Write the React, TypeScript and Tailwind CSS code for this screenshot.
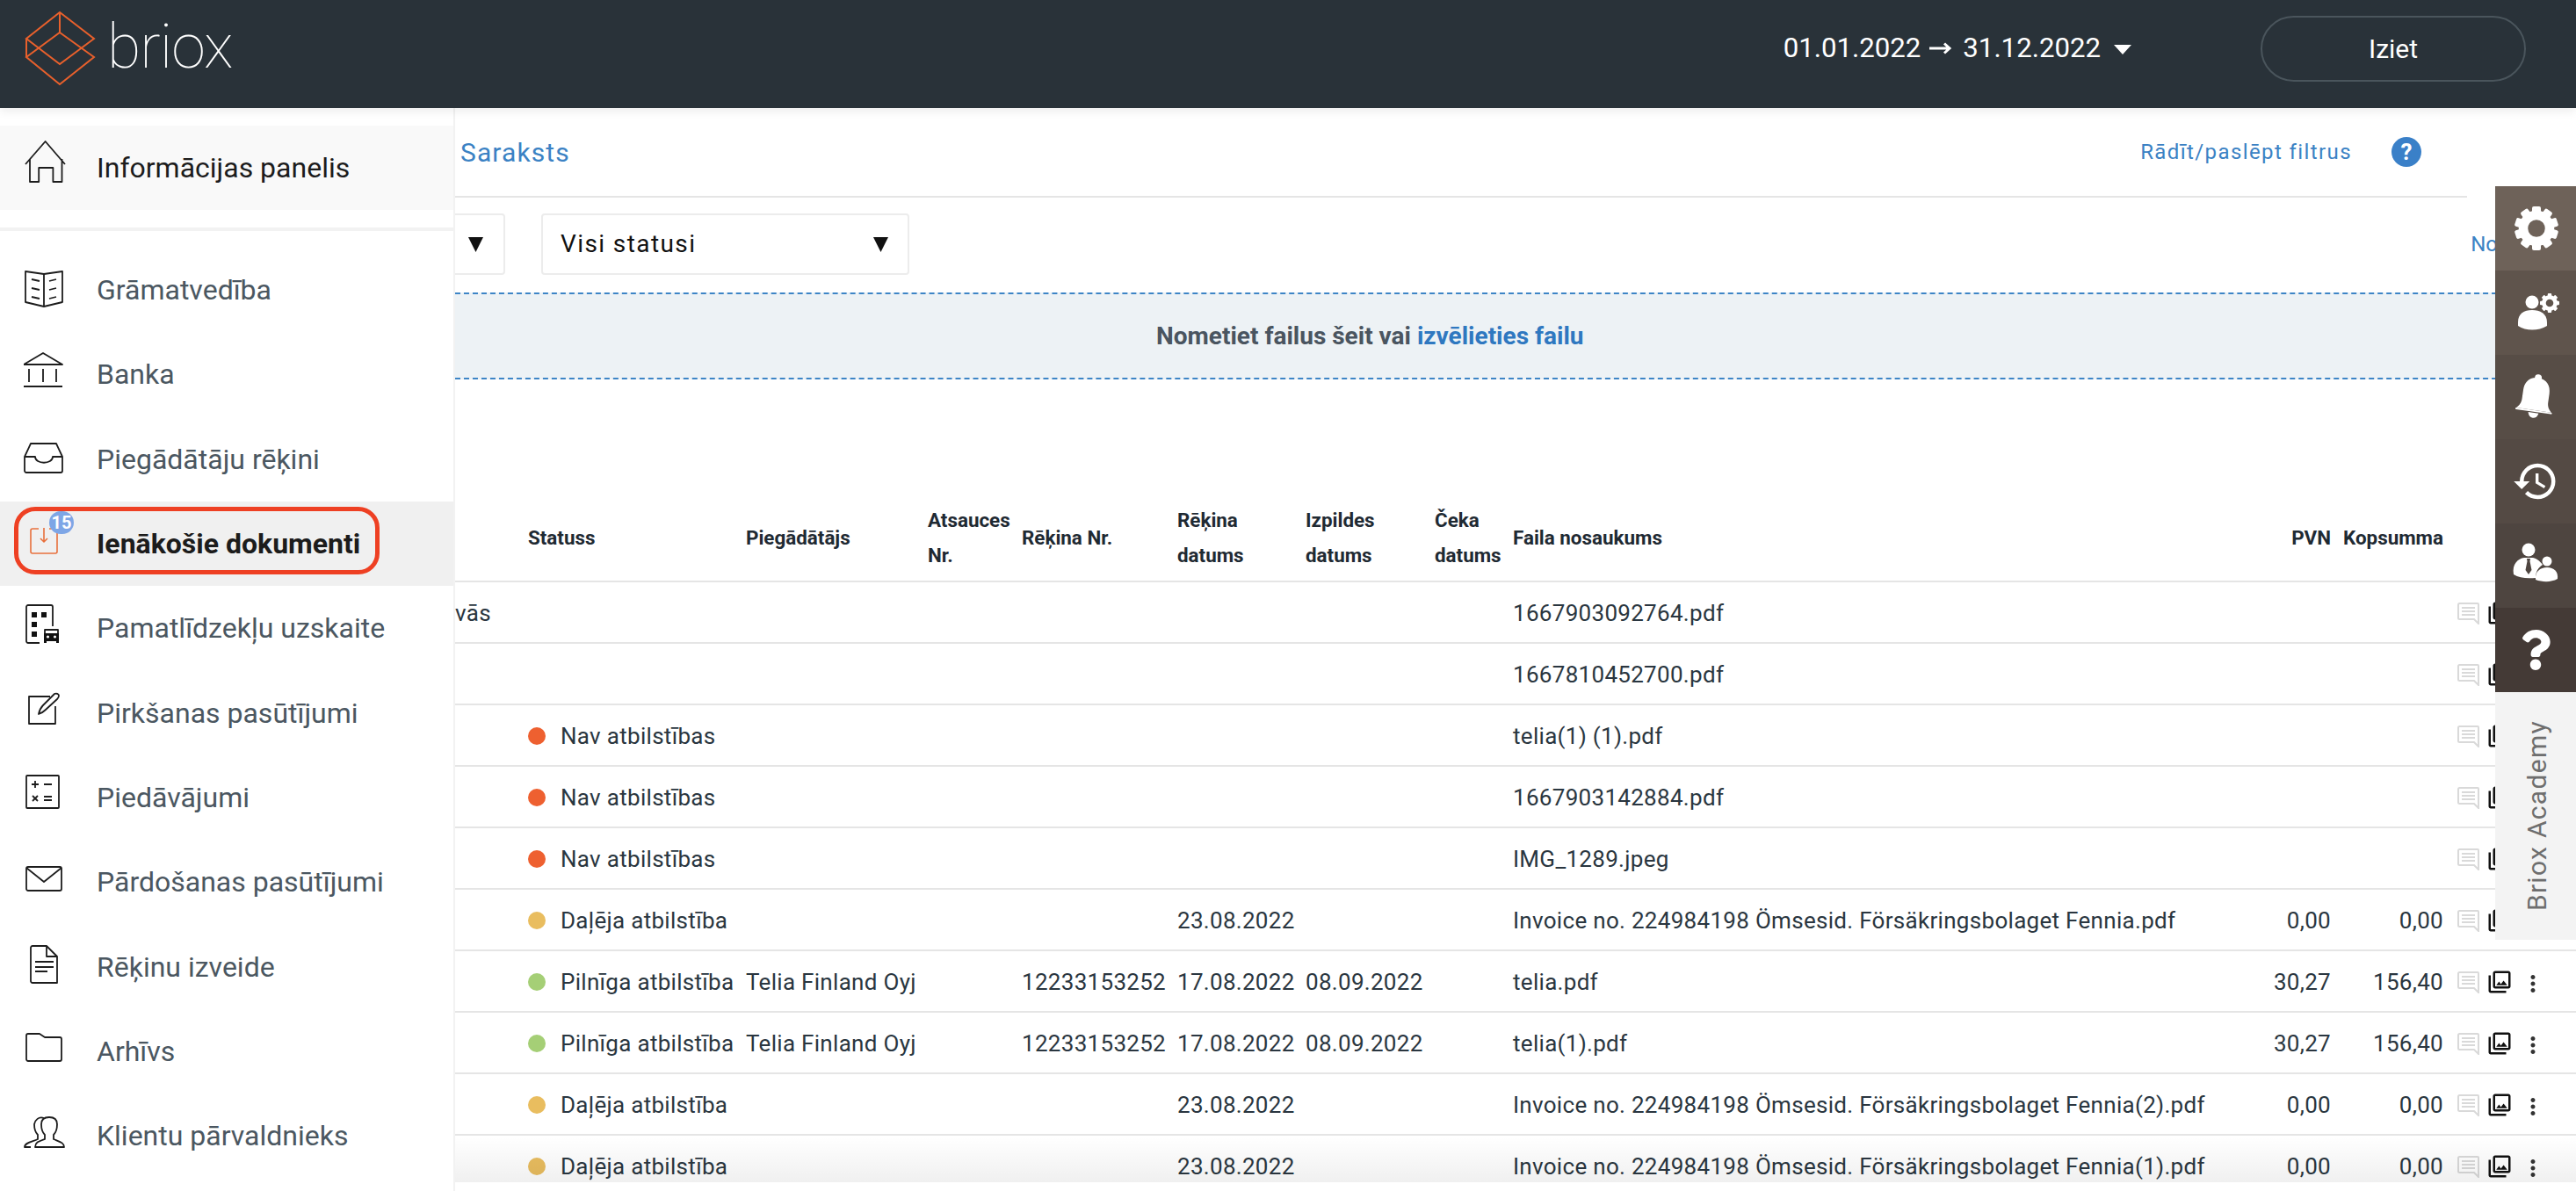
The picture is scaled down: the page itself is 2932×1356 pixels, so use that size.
import { MdHistory, MdMoreVert, MdOutlinePhotoLibrary } from 'react-icons/md'
import { FaQuestion } from 'react-icons/fa'

const gridCols =
  'grid grid-cols-[83px_248px_207px_107px_177px_146px_147px_89px_838px_93px_128px_1fr] items-center'

function Icon({ children }: { children: React.ReactNode }) {
  return (
    <svg viewBox="0 0 56 64" fill="none" stroke="#1d1d1d" strokeWidth="1.8" strokeLinejoin="round" className="w-[56px] h-[64px] shrink-0">
      {children}
    </svg>
  )
}

const menu = [
  {
    label: 'Grāmatvedība',
    icon: (
      <>
        <path d="M2 11L23 14L44 11V46L23 51L2 46Z" />
        <path d="M23 14V51" />
        <path d="M9 20l9 2M9 30l9 2M9 40l9 2M29 22l8-2M29 32l8-2M29 42l8-2" />
      </>
    ),
  },
  {
    label: 'Banka',
    icon: (
      <>
        <path d="M0 21L22 8L44 21Z" />
        <path d="M6 26V41M22 26V41M37 26V41M0 46H44" />
      </>
    ),
  },
  {
    label: 'Piegādātāju rēķini',
    icon: (
      <>
        <path d="M8 14H37L44 29V45a2 2 0 0 1-2 2H3a2 2 0 0 1-2-2V29Z" />
        <path d="M1 29H13c0 9 20 9 20 0H44" />
      </>
    ),
  },
  {
    label: 'Ienākošie dokumenti',
    active: true,
    icon: (
      <g stroke="#e8703c" strokeWidth="1.6">
        <path d="M17 15H10a2 2 0 0 0-2 2V41a2 2 0 0 0 2 2H36a2 2 0 0 0 2-2V17a2 2 0 0 0-2-2H29" />
        <path d="M23 14V30M19 26l4 4 4-4" />
      </g>
    ),
  },
  {
    label: 'Pamatlīdzekļu uzskaite',
    icon: (
      <>
        <path d="M18 49H5a2 2 0 0 1-2-2V8a2 2 0 0 1 2-2H31a2 2 0 0 1 2 2V30" />
        <g fill="#111" stroke="none">
          <rect x="9" y="14" width="6" height="6" />
          <rect x="20" y="14" width="6" height="6" />
          <rect x="9" y="25" width="6" height="6" />
          <rect x="9" y="36" width="6" height="6" />
          <path d="M23 38H40V49H37V47H26V49H23Z" />
        </g>
        <path d="M24 38V34H39V38" />
        <circle cx="27.5" cy="42" r="1.6" fill="#fff" stroke="none" />
        <circle cx="35.5" cy="42" r="1.6" fill="#fff" stroke="none" />
      </>
    ),
  },
  {
    label: 'Pirkšanas pasūtījumi',
    icon: (
      <>
        <path d="M30 13H6V44H36V24" />
        <path d="M17 33C18 28 20 25 22 23L35 10C37 9 40 10 40 12C40 14 39 15 38 16L25 28C23 30 20 32 17 33Z" />
      </>
    ),
  },
  {
    label: 'Piedāvājumi',
    icon: (
      <>
        <rect x="3" y="7" width="37" height="37" rx="1" />
        <path d="M13 13V21M9 17H17M23 17H32M10 30L16 36M16 30L10 36M23 31H32M23 35H32" />
      </>
    ),
  },
  {
    label: 'Pārdošanas pasūtījumi',
    icon: (
      <>
        <rect x="3" y="15" width="40" height="27" rx="2" />
        <path d="M3 16L23 32L43 16" />
      </>
    ),
  },
  {
    label: 'Rēķinu izveide',
    icon: (
      <>
        <path d="M8 10a2 2 0 0 1 2-2H26L38 20V50H10a2 2 0 0 1-2-2Z" />
        <path d="M26 8V20H38M13 26H34M13 32H34M13 37H27" />
      </>
    ),
  },
  {
    label: 'Arhīvs',
    icon: <path d="M3 14a2 2 0 0 1 2-2H18L24 16H41a2 2 0 0 1 2 2V41a2 2 0 0 1-2 2H5a2 2 0 0 1-2-2Z" />,
  },
  {
    label: 'Klientu pārvaldnieks',
    icon: (
      <>
        <path d="M13 45C13 40 16 39 24 36V31C21 28 20 24 20 19C20 13 24 11 29 11C34 11 38 13 38 19C38 24 37 28 34 31V36C41 39 46 40 46 45Z" />
        <path d="M23 12C17 10 13 14 12 19C12 24 13 28 16 31V36C9 39 1 40 1 45H8" />
      </>
    ),
  },
]

const invoice = 'Invoice no. 224984198 Ömsesid. Försäkringsbolaget Fennia'

const rows = [
  { prefix: 'vās', file: '1667903092764.pdf' },
  { file: '1667810452700.pdf' },
  { dot: 'bg-[#ee6030]', status: 'Nav atbilstības', file: 'telia(1) (1).pdf' },
  { dot: 'bg-[#ee6030]', status: 'Nav atbilstības', file: '1667903142884.pdf' },
  { dot: 'bg-[#ee6030]', status: 'Nav atbilstības', file: 'IMG_1289.jpeg' },
  { dot: 'bg-[#e9bd5f]', status: 'Daļēja atbilstība', date: '23.08.2022', file: invoice + '.pdf', vat: '0,00', total: '0,00' },
  { dot: 'bg-[#a5cf76]', status: 'Pilnīga atbilstība', supplier: 'Telia Finland Oyj', no: '12233153252', date: '17.08.2022', due: '08.09.2022', file: 'telia.pdf', vat: '30,27', total: '156,40' },
  { dot: 'bg-[#a5cf76]', status: 'Pilnīga atbilstība', supplier: 'Telia Finland Oyj', no: '12233153252', date: '17.08.2022', due: '08.09.2022', file: 'telia(1).pdf', vat: '30,27', total: '156,40' },
  { dot: 'bg-[#e9bd5f]', status: 'Daļēja atbilstība', date: '23.08.2022', file: invoice + '(2).pdf', vat: '0,00', total: '0,00' },
  { dot: 'bg-[#e9bd5f]', status: 'Daļēja atbilstība', date: '23.08.2022', file: invoice + '(1).pdf', vat: '0,00', total: '0,00' },
]

function Gear({ cx, cy, r, teeth }: { cx: number; cy: number; r: number; teeth: number }) {
  return (
    <g>
      {Array.from({ length: teeth }, (_, i) => (
        <rect
          key={i}
          x={cx - r * 0.2}
          y={cy - r}
          width={r * 0.4}
          height={r * 0.4}
          rx={r * 0.08}
          fill="#fff"
          transform={`rotate(${(360 / teeth) * i} ${cx} ${cy})`}
        />
      ))}
      <circle cx={cx} cy={cy} r={r * 0.6} fill="none" stroke="#fff" strokeWidth={r * 0.42} />
    </g>
  )
}

function CommentIcon() {
  return (
    <svg viewBox="0 0 25 25" fill="none" stroke="#d9d9d9" className="w-[25px] h-[25px] shrink-0">
      <path d="M1 2.5a1.5 1.5 0 0 1 1.5-1.5H23a1 1 0 0 1 1 1V24L19 19H2.5A1.5 1.5 0 0 1 1 17.5Z" strokeWidth="2" />
      <path d="M5 6H20M5 10H20M5 14H20" strokeWidth="1.8" />
    </svg>
  )
}

function SidePanel() {
  return (
    <div className="absolute right-0 top-[89px] w-[92px] flex flex-col">
      <div className="h-[96px] bg-[#6e6259] flex items-center justify-center pl-[2px]">
        <svg viewBox="0 0 56 56" className="w-[56px] h-[56px]">
          <Gear cx={28} cy={28} r={25} teeth={10} />
        </svg>
      </div>
      <div className="h-[96px] bg-[#5f544c] flex items-center justify-center pl-[6px]">
        <svg viewBox="0 0 56 56" className="w-[56px] h-[56px]" fill="#fff">
          <circle cx="21" cy="16" r="7.5" />
          <path d="M5 39C5 29 12 25 21 25C30 25 38 29 38 39V43C28 49 14 49 5 43Z" />
          <Gear cx={41} cy={17} r={11} teeth={8} />
        </svg>
      </div>
      <div className="h-[96px] bg-[#574d46] flex items-center justify-center">
        <svg viewBox="0 0 56 56" className="w-[56px] h-[56px] rotate-[8deg]" fill="#fff">
          <circle cx="28" cy="6" r="4" />
          <path d="M28 6C38 6 43 13 43 22V32C43 37 45 40 48 43H8C11 40 13 37 13 32V22C13 13 18 6 28 6Z" />
          <rect x="7" y="43" width="42" height="2" rx="1" />
          <path d="M22 46H34C33 50 31 52 28 52C25 52 23 50 22 46Z" />
        </svg>
      </div>
      <div className="h-[96px] bg-[#544a44] flex items-center justify-center">
        <MdHistory size={54} color="#fff" />
      </div>
      <div className="h-[96px] bg-[#4e4540] flex items-center justify-center">
        <svg viewBox="0 0 56 56" className="w-[56px] h-[56px]" fill="#fff">
          <circle cx="20" cy="10" r="7.5" />
          <path d="M3 38C1 26 8 20 15 19H25C30 20 34 24 36 27C31 30 28 35 28 42C18 43 9 42 3 38Z" />
          <path d="M18 20H22L21.5 23L23.5 33L20 38L16.5 33L18.5 23Z" fill="#4e4540" />
          <circle cx="41" cy="23" r="5.5" />
          <path d="M28 44C27 35 33 30 41 30C49 30 54 35 53 43C46 47 36 47 28 44Z" />
        </svg>
      </div>
      <div className="h-[96px] bg-[#443a36] flex items-center justify-center">
        <FaQuestion size={46} color="#fff" />
      </div>
      <div className="h-[282px] bg-[#f3f3f3] flex items-center justify-center pl-[2px]">
        <span className="[writing-mode:vertical-rl] rotate-180 text-[30px] tracking-[1.3px] text-[#6e6e6e] whitespace-nowrap">
          Briox Academy
        </span>
      </div>
    </div>
  )
}

export default function App() {
  return (
    <div className="h-screen w-full flex flex-col overflow-hidden bg-white [font-family:Roboto,sans-serif]">
      {/* header */}
      <header className="h-[123px] shrink-0 bg-[#293239] flex items-center pl-[27px] pr-[57px] pb-[13px] relative z-10 shadow-[0_4px_10px_rgba(0,0,0,0.07)]">
        <svg viewBox="0 0 82 86" fill="none" stroke="#e8602c" strokeWidth="2" className="w-[82px] h-[86px]">
          <path d="M41 2L80 32L41 61L3 32Z" />
          <path d="M41 25L80 53L41 84L3 53Z" />
          <path d="M3 32V53M41 2V25" />
        </svg>
        <span className="ml-[13px] -mt-[4px] text-[70px] leading-none font-thin tracking-[-1px] text-white">briox</span>
        <div className="ml-auto flex items-center text-white text-[31.2px]">
          <span>01.01.2022</span>
          <svg viewBox="0 0 26 14" className="w-[26px] h-[14px] ml-[10px] mr-[12px]" fill="none" stroke="#fff" strokeWidth="3">
            <path d="M0 7H22M17 1.5L23 7L17 12.5" />
          </svg>
          <span>31.12.2022</span>
          <svg viewBox="0 0 20 11" className="w-[20px] h-[11px] ml-[15px] mt-[4px]" fill="#fff">
            <path d="M0 0H20L10 11Z" />
          </svg>
        </div>
        <button className="ml-[147px] w-[302px] h-[75px] rounded-full border-2 border-[#4a555c] text-white text-[30px]">Iziet</button>
      </header>

      <div className="flex-1 flex min-h-0">
        {/* sidebar */}
        <aside className="w-[518px] shrink-0 border-r-2 border-[#f2f2f2] pt-[20px] overflow-hidden">
          <div className="h-[96px] bg-[#f9f9f9] flex items-center pl-[27px] text-[32px] text-[#1c1c1c]">
            <Icon>
              <path d="M2 28L24.6 2L47 28M7 22V48H17.2V32H33.4V48H43.5V22" />
            </Icon>
            <span className="ml-[27px]">Informācijas panelis</span>
          </div>
          <div className="h-[4px] bg-[#f2f2f2] mt-[20px] mb-[19px]" />
          {menu.map((item) => (
            <div
              key={item.label}
              className={
                item.active
                  ? 'h-[96.3px] bg-[#f0f0f0] flex items-center pl-[27px] text-[32px] font-bold text-[#1c1c1c] relative'
                  : 'h-[96.3px] flex items-center pl-[27px] text-[32px] text-[#4b5761]'
              }
            >
              <Icon>{item.icon}</Icon>
              <span className="ml-[27px]">{item.label}</span>
              {item.active && (
                <>
                  <span className="absolute left-[56px] top-[11px] w-[28px] h-[26px] rounded-full bg-[#7ea6e6] text-white text-[20px] leading-[26px] text-center">
                    15
                  </span>
                  <span className="absolute left-[16px] top-[6px] w-[416px] h-[77px] rounded-[24px] border-[5px] border-[#ee4023]" />
                </>
              )}
            </div>
          ))}
        </aside>

        {/* content */}
        <main className="flex-1 min-w-0 flex flex-col relative overflow-hidden">
          <div className="h-[102px] shrink-0 mr-[124px] border-b-2 border-[#e5e5e5] flex items-center pl-[6px] pr-[52px]">
            <span className="text-[30px] tracking-[1.1px] text-[#3b82c4]">Saraksts</span>
            <span className="ml-auto text-[24px] tracking-[1.4px] text-[#3b82c4]">Rādīt/paslēpt filtrus</span>
            <span className="ml-[45px] w-[34px] h-[34px] rounded-full bg-[#3a80c8] text-white text-[26px] font-bold leading-[34px] text-center">?</span>
          </div>

          <div className="h-[70px] mt-[18px] shrink-0 flex items-center text-[28px] tracking-[1.4px] text-[#111]">
            <div className="-ml-[43px] w-[100px] h-full border-2 border-[#ececec] rounded-[4px] flex items-center justify-end pr-[23px]">
              <svg viewBox="0 0 17 17" className="w-[17px] h-[17px]" fill="#111">
                <path d="M0 0H17L8.5 17Z" />
              </svg>
            </div>
            <div className="ml-[41px] w-[419px] h-full border-2 border-[#ececec] rounded-[4px] flex items-center justify-between pl-[20px] pr-[22px]">
              <span>Visi statusi</span>
              <svg viewBox="0 0 17 17" className="w-[17px] h-[17px]" fill="#111">
                <path d="M0 0H17L8.5 17Z" />
              </svg>
            </div>
            <span className="ml-auto mr-[89px] text-[24px] tracking-normal text-[#3b82c4]">No</span>
          </div>

          <div className="h-[99px] mt-[20px] shrink-0 bg-[#edf2f5] border-y-2 border-dashed border-[#3d85c6] flex items-center pl-[798px] text-[28px] font-bold text-[#4a5560]">
            <span>
              Nometiet failus šeit vai <span className="text-[#2f78c0]">izvēlieties failu</span>
            </span>
          </div>

          <div className={`${gridCols} h-[100px] mt-[131px] shrink-0 border-b-2 border-[#e5e5e5] text-[22.4px] font-bold leading-[40px] text-[#1f2a33]`}>
            <span />
            <span>Statuss</span>
            <span>Piegādātājs</span>
            <span>Atsauces Nr.</span>
            <span>Rēķina Nr.</span>
            <span>Rēķina<br />datums</span>
            <span>Izpildes<br />datums</span>
            <span>Čeka<br />datums</span>
            <span>Faila nosaukums</span>
            <span className="text-right">PVN</span>
            <span className="text-right">Kopsumma</span>
            <span />
          </div>

          <div className="flex-1 min-h-0 overflow-hidden relative text-[26px] tracking-[0.3px] text-[#2a3640]">
            {rows.map((row) => (
              <div key={row.file} className={`${gridCols} h-[70px] pt-[2px] border-b-2 border-[#e5e5e5] whitespace-nowrap`}>
                <span>{row.prefix}</span>
                <span className="flex items-center gap-[17px]">
                  {row.dot && <span className={`w-[20px] h-[20px] rounded-full ${row.dot}`} />}
                  {row.status}
                </span>
                <span>{row.supplier}</span>
                <span />
                <span>{row.no}</span>
                <span>{row.date}</span>
                <span>{row.due}</span>
                <span />
                <span>{row.file}</span>
                <span className="text-right">{row.vat}</span>
                <span className="text-right">{row.total}</span>
                <span className="flex items-center pl-[16px]">
                  <CommentIcon />
                  <MdOutlinePhotoLibrary size={30} color="#111" className="ml-[8px] shrink-0" />
                  <MdMoreVert size={30} color="#333" className="ml-[8px] mt-[4px] shrink-0" />
                </span>
              </div>
            ))}
            <div className="absolute inset-x-0 bottom-0 h-[52px] bg-gradient-to-b from-transparent to-black/6" />
          </div>
          <div className="h-[10px] shrink-0 bg-white" />

          <SidePanel />
        </main>
      </div>
    </div>
  )
}
